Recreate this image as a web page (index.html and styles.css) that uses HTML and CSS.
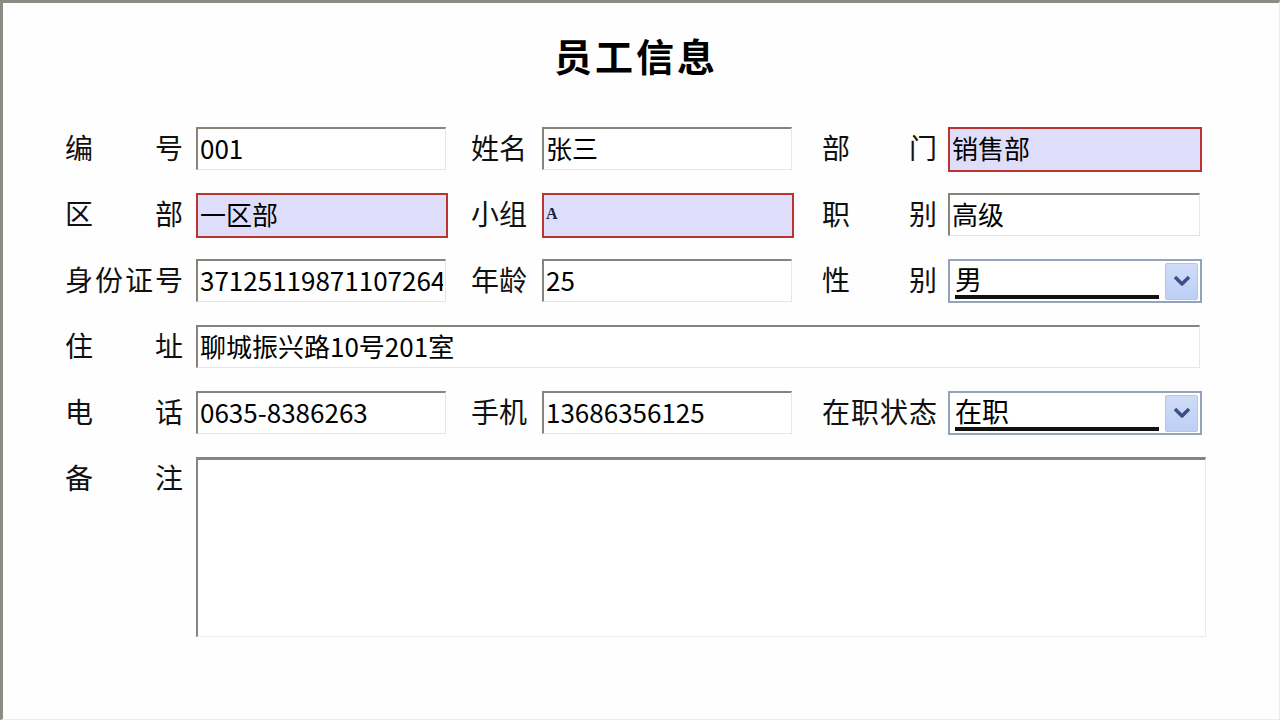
FILE: index.html
```html
<!DOCTYPE html>
<html lang="zh-CN">
<head>
<meta charset="utf-8">
<title>员工信息</title>
<link rel="stylesheet" href="styles.css">
</head>
<body>
<div class="page">
  <h1 class="title">员工信息</h1>
  <form class="form">
    <label class="lbl wide">编号</label>
    <input class="txt" type="text" value="001">
    <label class="lbl">姓名</label>
    <input class="txt" type="text" value="张三">
    <label class="lbl wide3">部门</label>
    <input class="txt req w3" type="text" value="销售部">

    <label class="lbl wide">区部</label>
    <input class="txt req" type="text" value="一区部">
    <label class="lbl">小组</label>
    <input class="txt req small" type="text" value="A">
    <label class="lbl wide3">职别</label>
    <input class="txt w3" type="text" value="高级">

    <label class="lbl wide">身份证号</label>
    <input class="txt" type="text" value="371251198711072644">
    <label class="lbl">年龄</label>
    <input class="txt" type="text" value="25">
    <label class="lbl wide3">性别</label>
    <div class="select">
      <span class="sel-value">男</span>
      <span class="sel-btn"><svg width="20" height="14" viewBox="0 0 20 14"><path d="M3 3 L10 10 L17 3" fill="none" stroke="#3d4f85" stroke-width="3.5" stroke-linejoin="round"/></svg></span>
    </div>

    <label class="lbl wide">住址</label>
    <input class="txt full" type="text" value="聊城振兴路10号201室">

    <label class="lbl wide">电话</label>
    <input class="txt" type="text" value="0635-8386263">
    <label class="lbl">手机</label>
    <input class="txt" type="text" value="13686356125">
    <label class="lbl wide3">在职状态</label>
    <div class="select">
      <span class="sel-value">在职</span>
      <span class="sel-btn"><svg width="20" height="14" viewBox="0 0 20 14"><path d="M3 3 L10 10 L17 3" fill="none" stroke="#3d4f85" stroke-width="3.5" stroke-linejoin="round"/></svg></span>
    </div>

    <label class="lbl wide">备注</label>
    <textarea class="memo"></textarea>
  </form>
</div>
</body>
</html>
```
FILE: styles.css
```css
* { box-sizing: border-box; }
html, body {
  margin: 0;
  padding: 0;
  background: #fefefe;
}
body {
  font-family: "Noto Sans CJK SC", "DejaVu Sans", sans-serif;
  color: #111;
}
.page {
  width: 1280px;
  height: 720px;
  border-top: 3px solid #8c8c84;
  border-left: 3px solid #8c8c84;
  border-right: 1px solid #ecece8;
  border-bottom: 1px solid #ecece8;
  padding: 27px 0 0 62px;
  background: #fefefe;
}
.title {
  margin: 0 0 47px 0;
  padding-right: 72px;
  font-size: 38px;
  line-height: 50px;
  font-weight: bold;
  letter-spacing: 3px;
  text-align: center;
  color: #000;
}
.form {
  display: grid;
  grid-template-columns: 131px 275px 71px 280px 126px 254px;
  grid-auto-rows: 43px;
  row-gap: 23px;
  align-items: start;
}
.lbl {
  font-size: 28px;
  line-height: 41px;
  height: 43px;
  white-space: nowrap;
  color: #111;
}
.lbl.wide {
  width: 118px;
  text-align: justify;
  text-align-last: justify;
}
.lbl.wide3 {
  width: 115px;
  text-align: justify;
  text-align-last: justify;
}
.txt {
  display: block;
  width: 250px;
  height: 43px;
  margin: 0;
  padding: 0 2px 4px 2px;
  font-family: "Noto Sans CJK SC", "DejaVu Sans", sans-serif;
  font-size: 26px;
  line-height: 36px;
  color: #000;
  background: #fff;
  border-style: solid;
  border-width: 2px 1px 1px 2px;
  border-color: #85857c #e6e8e0 #e6e8e0 #85857c;
  outline: none;
}
.txt.w3 { width: 252px; }
.txt.req {
  width: 252px;
  height: 45px;
  background: #dedefb;
  border: 2px solid #bb3530;
}
.txt.req.w3 { width: 254px; }
.txt.small {
  font-family: "Liberation Serif", serif;
  font-size: 16px;
  font-weight: bold;
  color: #1a2440;
}
.txt.full {
  grid-column: 2 / 7;
  width: 1004px;
}
.select {
  width: 254px;
  height: 44px;
  display: flex;
  align-items: center;
  background: #fff;
  border: 2px solid #93a3ba;
  padding: 2px 2px 2px 5px;
}
.sel-value {
  flex: 1;
  height: 36px;
  margin-right: 6px;
  font-size: 27px;
  line-height: 31px;
  color: #000;
  border-bottom: 4px solid #111;
}
.sel-btn {
  width: 33px;
  height: 37px;
  display: flex;
  align-items: center;
  justify-content: center;
  background: linear-gradient(#cfdcf8, #bccff5);
  border: 1px solid #b3c5ec;
  border-radius: 2px;
}
.memo {
  grid-column: 2 / 7;
  grid-row: span 4;
  width: 1010px;
  height: 180px;
  margin: 0;
  resize: none;
  background: #fff;
  border-style: solid;
  border-width: 3px 1px 1px 2px;
  border-color: #85857c #ecece6 #ecece6 #85857c;
  outline: none;
}
```
